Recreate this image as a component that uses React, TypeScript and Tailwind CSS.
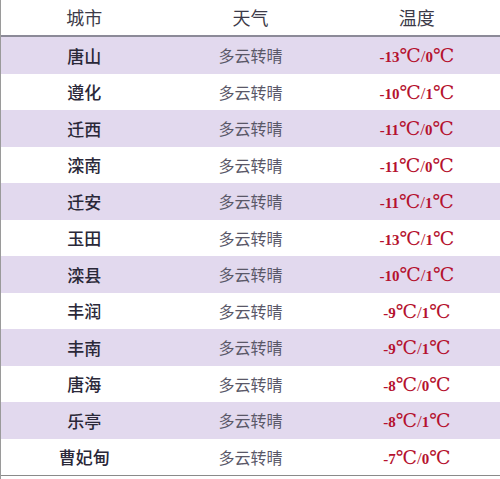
const rows = [
  { city: '唐山', lo: '-13', hi: '0' },
  { city: '遵化', lo: '-10', hi: '1' },
  { city: '迁西', lo: '-11', hi: '0' },
  { city: '滦南', lo: '-11', hi: '0' },
  { city: '迁安', lo: '-11', hi: '1' },
  { city: '玉田', lo: '-13', hi: '1' },
  { city: '滦县', lo: '-10', hi: '1' },
  { city: '丰润', lo: '-9', hi: '1' },
  { city: '丰南', lo: '-9', hi: '1' },
  { city: '唐海', lo: '-8', hi: '0' },
  { city: '乐亭', lo: '-8', hi: '1' },
  { city: '曹妃甸', lo: '-7', hi: '0' },
];

const cjk = { fontFamily: '"Noto Sans CJK SC", "Noto Sans", sans-serif' };

function Temp({ lo, hi }: { lo: string; hi: string }) {
  return (
    <span className="flex items-baseline text-[#b5122e]">
      <span className="text-[15px] font-bold" style={{ fontFamily: '"Liberation Serif", serif' }}>{lo}</span>
      <span className="text-[19px]" style={{ fontFamily: '"DejaVu Serif", serif' }}>℃</span>
      <span className="text-[17px]" style={{ fontFamily: '"Liberation Serif", serif' }}>/</span>
      <span className="text-[15px] font-bold" style={{ fontFamily: '"Liberation Serif", serif' }}>{hi}</span>
      <span className="text-[19px]" style={{ fontFamily: '"DejaVu Serif", serif' }}>℃</span>
    </span>
  );
}

export default function App() {
  return (
    <div className="w-[500px] h-[479px] bg-white border-l border-[#9a9a9a] overflow-hidden" style={cjk}>
      <div className="grid grid-cols-3 h-[37px] border-b-2 border-[#8c8a98] text-[18px] text-[#3c3a48]">
        <div className="flex items-center justify-center">城市</div>
        <div className="flex items-center justify-center">天气</div>
        <div className="flex items-center justify-center">温度</div>
      </div>
      <div className="border-b border-[#8a8a8a]">
        {rows.map((r, i) => (
          <div
            key={r.city}
            className={`grid grid-cols-3 h-[36.5px] ${i % 2 === 0 ? 'bg-[#e2d9ee]' : 'bg-white'}`}
          >
            <div className="flex items-center justify-center text-[17px] font-medium text-[#2a2838]">{r.city}</div>
            <div className="flex items-center justify-center text-[16px] text-[#5a5868]">多云转晴</div>
            <div className="flex items-center justify-center">
              <Temp lo={r.lo} hi={r.hi} />
            </div>
          </div>
        ))}
      </div>
    </div>
  );
}
